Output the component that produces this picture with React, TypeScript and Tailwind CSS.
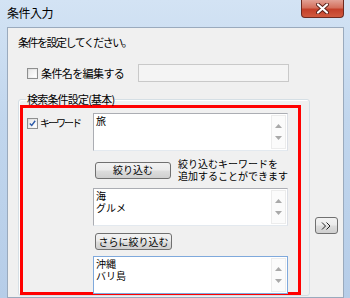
import React from 'react'

const jp = "font-['Meiryo_UI','Noto_Sans_CJK_JP',sans-serif]"

function CheckBox({ checked }: { checked?: boolean }) {
  return (
    <div className="w-[11px] h-[11px] shrink-0 border border-[#8e8f8f] bg-[linear-gradient(135deg,#dcdcdc,#fbfbfb)] p-[1px]">
      <div className="w-full h-full bg-[linear-gradient(135deg,#e9e9e9,#ffffff)] flex items-center justify-center">
        {checked && (
          <svg width="9" height="9" viewBox="0 0 9 9">
            <path d="M1 4.5 L3.5 7 L8 1" fill="none" stroke="#2c5aa8" strokeWidth="1.8" />
          </svg>
        )}
      </div>
    </div>
  )
}

function ScrollBar() {
  return (
    <div className="w-[15px] my-[1px] mr-[1px] flex flex-col justify-between items-center py-[8px] border border-[#ececec] bg-[#fbfbfb]">
      <svg width="7" height="4" viewBox="0 0 7 4">
        <path d="M0 4 L3.5 0 L7 4Z" fill="#a9a9a9" />
      </svg>
      <svg width="7" height="4" viewBox="0 0 7 4">
        <path d="M0 0 L3.5 4 L7 0Z" fill="#a9a9a9" />
      </svg>
    </div>
  )
}

function ListBox({ lines, focused }: { lines: string[]; focused?: boolean }) {
  return (
    <div
      className={`w-[195px] h-[38px] flex bg-white border ${
        focused ? 'border-[#7fa9dc]' : 'border-[#abadb3] border-r-[#dbdfe6] border-b-[#e3e9ef]'
      }`}
    >
      <div className="flex-1 pl-[2px] pt-[1px] text-[10px] leading-[12px] text-black">
        {lines.map((l) => (
          <div key={l}>{l}</div>
        ))}
      </div>
      <ScrollBar />
    </div>
  )
}

function WinButton({ label, width }: { label: string; width: string }) {
  return (
    <button
      className={`${width} h-[17px] shrink-0 rounded-[3px] border border-[#707070] bg-[linear-gradient(180deg,#f2f2f2_0%,#ebebeb_48%,#dddddd_52%,#cfcfcf_100%)] text-[10px] leading-none text-black flex items-center justify-center`}
    >
      {label}
    </button>
  )
}

export default function App() {
  return (
    <div className={`${jp} w-[350px] h-[298px] overflow-hidden flex flex-col bg-[linear-gradient(180deg,#d3e3f4_0%,#c1d6ed_40%,#b6cde8_100%)]`}>
      {/* Title bar */}
      <div className="h-[27px] shrink-0 flex items-start justify-between">
        <span className="ml-[7px] mt-[6px] text-[12px] leading-[14px] tracking-[-0.5px] text-black">条件入力</span>
        <div className="mr-[6px] w-[43px] h-[18px] rounded-b-[4px] border border-t-0 border-[#6e2a20] bg-[linear-gradient(180deg,#e2a195_0%,#d4705d_45%,#c4402a_55%,#d05a3f_100%)] flex items-center justify-center">
          <svg width="13" height="11" viewBox="0 0 13 11">
            <path d="M2 1.5 L11 9.5 M11 1.5 L2 9.5" stroke="#5a2018" strokeWidth="4" strokeLinecap="round" />
            <path d="M2 1.5 L11 9.5 M11 1.5 L2 9.5" stroke="#ffffff" strokeWidth="2.2" strokeLinecap="round" />
          </svg>
        </div>
      </div>

      {/* Client area */}
      <div className="ml-[7px] mr-[6px] flex-1 min-h-0 border border-[#9aaabd] bg-[#f0f0f0] text-black">
        <div className="pl-[10px] pt-[8px] text-[11px] leading-[13px] tracking-[-1.5px]">条件を設定してください。</div>

        <div className="mt-[15px] flex items-center pl-[19px]">
          <CheckBox />
          <span className="ml-[3px] text-[11px] leading-[13px] tracking-[-0.6px]">条件名を編集する</span>
          <div className="ml-auto mr-[54px] w-[151px] h-[18px] bg-[#f4f4f4] border border-[#c9c9c9]" />
        </div>

        <div className="mt-[11px] flex items-start">
          <fieldset className="ml-[10px] w-[292px] border border-[#d5dfe5] rounded-[3px] pl-[1px] shadow-[inset_1px_1px_0_#ffffff]">
            <legend className="ml-[6px] px-[1px] text-[11px] leading-[12px] tracking-[-0.8px]">検索条件設定(基本)</legend>
            <div className="w-[281px] h-[190px] border-[3px] border-[#ff0000] grid grid-cols-[66px_195px] pl-[4px] pt-[5px]">
              <div className="flex items-center self-start mt-[4px]">
                <CheckBox checked />
                <span className="ml-[2px] text-[10px] leading-[12px] tracking-[-2px]">キーワード</span>
              </div>
              <div className="flex flex-col items-start">
                <ListBox lines={['旅']} />
                <div className="mt-[7px] flex items-center">
                  <div className="ml-[2px]">
                    <WinButton label="絞り込む" width="w-[76px]" />
                  </div>
                  <div className="ml-[7px] text-[10px] leading-[12px] whitespace-nowrap">
                    <div>絞り込むキーワードを</div>
                    <div>追加することができます</div>
                  </div>
                </div>
                <div className="mt-[6px]">
                  <ListBox lines={['海', 'グルメ']} />
                </div>
                <div className="mt-[7px] ml-[2px]">
                  <WinButton label="さらに絞り込む" width="w-[77px]" />
                </div>
                <div className="mt-[6px]">
                  <ListBox lines={['沖縄', 'バリ島']} focused />
                </div>
              </div>
            </div>
          </fieldset>

          <div className="ml-[5px] mt-[124px]">
            <button className="w-[23px] h-[17px] rounded-[3px] border border-[#707070] bg-[linear-gradient(180deg,#f2f2f2_0%,#ebebeb_48%,#dddddd_52%,#cfcfcf_100%)] flex items-center justify-center">
              <svg width="11" height="8" viewBox="0 0 11 8">
                <path d="M1 0.5 L4.5 4 L1 7.5 M5.5 0.5 L9 4 L5.5 7.5" fill="none" stroke="#222" strokeWidth="1" />
              </svg>
            </button>
          </div>
        </div>
      </div>
    </div>
  )
}
